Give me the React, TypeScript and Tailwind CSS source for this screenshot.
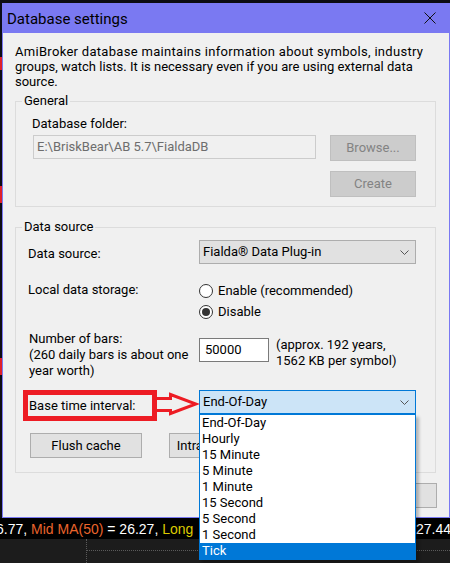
import React from 'react';

const intervals = [
  'End-Of-Day',
  'Hourly',
  '15 Minute',
  '5 Minute',
  '1 Minute',
  '15 Second',
  '5 Second',
  '1 Second',
  'Tick',
];

const Chevron = () => (
  <svg width="9" height="5" viewBox="0 0 9 5">
    <polyline points="0.5,0.5 4.5,4.5 8.5,0.5" fill="none" stroke="#555555" strokeWidth="1" />
  </svg>
);

const Radio = ({ checked, label }: { checked?: boolean; label: string }) => (
  <div className="h-[21px] flex items-center">
    <span className="w-[14px] h-[14px] rounded-full border border-[#333333] bg-white flex items-center justify-center">
      {checked && <span className="w-[8px] h-[8px] rounded-full bg-[#333333]" />}
    </span>
    <span className="ml-[5px]">{label}</span>
  </div>
);

const App: React.FC = () => {
  return (
    <div className="relative w-[450px] h-[563px] overflow-hidden bg-black font-['Roboto',sans-serif] text-[13px] leading-[16px] text-black">
      <div className="h-[3px] bg-[#0c0c12]" />
      <div className="flex">
        {/* strip of the chart behind the dialog */}
        <div className="w-[2px] h-[515px] flex flex-col bg-[#0c0c14]">
          <div className="h-[54px]" />
          <div className="h-[13px] bg-[#e0202a]" />
          <div className="h-[116px]" />
          <div className="h-[17px] bg-[#e0202a]" />
          <div className="h-[155px]" />
          <div className="h-[17px] bg-[#e0202a]" />
        </div>

        {/* dialog */}
        <div className="w-[448px] h-[515px] bg-[#7A79F2] flex flex-col">
          <div className="h-[30px] flex items-center justify-between pl-[5px] pr-[14px]">
            <span className="text-[15px] leading-[20px] pt-[2px]">Database settings</span>
            <svg width="12" height="12" viewBox="0 0 12 12">
              <path d="M0.5,0.5 L11.5,11.5 M11.5,0.5 L0.5,11.5" stroke="#111111" strokeWidth="1" />
            </svg>
          </div>

          <div className="mx-[1px] mb-[1px] flex-1 bg-[#F0F0F0]">
            <p className="pl-[12px] pt-[11px] leading-[15px]">
              <span className="tracking-[0.3px]">AmiBroker database maintains information about symbols, industry</span>
              <br />
              groups, watch lists. It is necessary even if you are using external data
              <br />
              source.
            </p>

            {/* General */}
            <fieldset className="mt-[4px] ml-[12px] w-[421px] border border-[#DCDCDC]">
              <legend className="ml-[6px] px-[2px]">General</legend>
              <div className="pl-[16px] pr-[19px] pb-[9px]">
                <div className="pt-[7px]">Database folder:</div>
                <div className="mt-[3px] flex items-start">
                  <div className="ml-[1px] w-[283px] h-[24px] border border-[#CCCCCC] bg-[#F0F0F0] flex items-center pl-[3px] text-[#6D6D6D]">
                    E:\BriskBear\AB 5.7\FialdaDB
                  </div>
                  <div className="ml-auto w-[86px] h-[26px] border border-[#BFBFBF] bg-[#CCCCCC] flex items-center justify-center text-[#838383]">
                    Browse...
                  </div>
                </div>
                <div className="mt-[10px] flex justify-end">
                  <div className="w-[86px] h-[26px] border border-[#BFBFBF] bg-[#CCCCCC] flex items-center justify-center text-[#838383]">
                    Create
                  </div>
                </div>
              </div>
            </fieldset>

            {/* Data source */}
            <fieldset className="mt-[12px] ml-[12px] w-[421px] border border-[#DCDCDC]">
              <legend className="ml-[6px] px-[2px]">Data source</legend>
              <div className="pb-[14px]">
                <div className="mt-[5px] pl-[12px] flex items-center">
                  <div className="w-[171px] pt-[4px]">Data source:</div>
                  <div className="w-[217px] h-[24px] border border-[#ADADAD] bg-[#E1E1E1] flex items-center justify-between pl-[3px] pr-[6px]">
                    <span>Fialda® Data Plug-in</span>
                    <Chevron />
                  </div>
                </div>

                <div className="mt-[16px] pl-[12px] flex items-start">
                  <div className="w-[171px] leading-[20px]">Local data storage:</div>
                  <div>
                    <Radio label="Enable (recommended)" />
                    <Radio checked label="Disable" />
                  </div>
                </div>

                <div className="mt-[9px] pl-[13px] flex items-start">
                  <div className="w-[170px]">
                    Number of bars:
                    <br />
                    (260 daily bars is about one
                    <br />
                    year worth)
                  </div>
                  <div className="mt-[7px] w-[70px] h-[24px] border border-[#7A7A7A] bg-white flex items-center pl-[5px]">
                    50000
                  </div>
                  <div className="mt-[6px] ml-[7px]">
                    (approx. 192 years,
                    <br />
                    1562 KB per symbol)
                  </div>
                </div>

                <div className="relative mt-[11px] pl-[7px] flex items-start">
                  <div className="w-[134px] h-[31px] border-[5px] border-[#ED1C24] flex items-center pl-[1px]">
                    Base time interval:
                  </div>
                  <div className="ml-[42px] w-[217px] h-[24px] border border-[#0078D7] bg-[#CCE4F7] flex items-center justify-between pl-[3px] pr-[6px]">
                    <span>End-Of-Day</span>
                    <Chevron />
                  </div>
                  <svg className="absolute left-[132px] top-[2px]" width="52" height="25" viewBox="0 0 52 25">
                    <path
                      d="M8,6.5 H22.5 V2.5 L48,12 L22.5,21.5 V18.5 H8"
                      fill="none"
                      stroke="#ED1C24"
                      strokeWidth="3"
                    />
                  </svg>
                </div>

                <div className="mt-[12px] pl-[14px] flex gap-[27px]">
                  <div className="w-[112px] h-[25px] border border-[#ADADAD] bg-[#E1E1E1] flex items-center justify-center">
                    Flush cache
                  </div>
                  <div className="w-[122px] h-[25px] border border-[#ADADAD] bg-[#E1E1E1] flex items-center justify-center">
                    Intraday settings...
                  </div>
                </div>
              </div>
            </fieldset>

            <div className="mt-[10px] pr-[12px] flex justify-end gap-[10px]">
              <div className="w-[86px] h-[25px] border border-[#ADADAD] bg-[#E1E1E1] flex items-center justify-center">
                OK
              </div>
              <div className="w-[86px] h-[25px] border border-[#ADADAD] bg-[#E1E1E1] flex items-center justify-center">
                Cancel
              </div>
            </div>
          </div>
        </div>
      </div>

      {/* chart caption band */}
      <div className="h-[21px] bg-black flex items-center justify-between font-['Liberation_Sans',sans-serif] text-[14px] leading-[16px] text-white">
        <span className="-ml-[4px] whitespace-nowrap">
          6.77, <span className="text-[#EA642C]">Mid MA(50)</span> = 26.27,{' '}
          <span className="text-[#DCCB00]">Long</span>
        </span>
        <span className="mr-[-1px]">27.44</span>
      </div>
      <div className="h-[24px] bg-[#1C1C1C] flex">
        <div className="w-[87px] border-r border-dotted border-[#5a5a5a]" />
        <div className="flex-1 mt-[11px] h-0 border-t border-dotted border-[#5a5a5a]" />
      </div>

      {/* open drop-down list */}
      <div className="absolute left-[199px] top-[414px] w-[217px] border border-[#0078D7] bg-white shadow-[3px_3px_3px_rgba(0,0,0,0.25)]">
        {intervals.map((item) => (
          <div
            key={item}
            className={
              item === 'Tick'
                ? 'h-[16px] pl-[2px] flex items-center bg-[#0078D7] text-white'
                : 'h-[16px] pl-[2px] flex items-center'
            }
          >
            {item}
          </div>
        ))}
      </div>
    </div>
  );
};

export default App;
